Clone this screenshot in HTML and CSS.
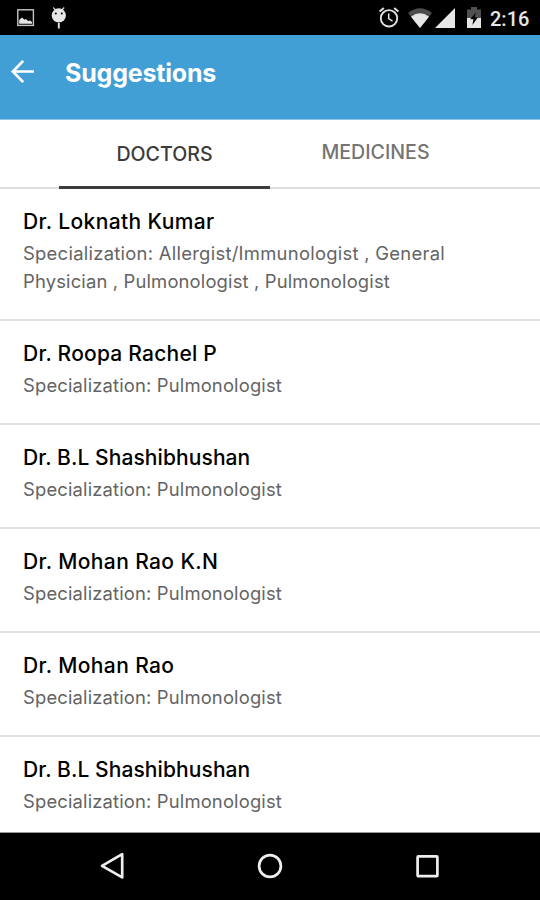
FILE: index.html
```html
<!DOCTYPE html>
<html lang="en">
<head>
  <meta charset="UTF-8">
  <title>Suggestions</title>
  <link rel="stylesheet" href="styles.css">
</head>
<body>
  <div class="status-bar">
    <div class="status-left">
      <svg class="icon-picture" width="18" height="18" viewBox="0 0 18 18">
        <rect x="0.8" y="0.8" width="15.6" height="15.6" fill="none" stroke="#c4c4c4" stroke-width="1.4"/>
        <path d="M2.2 14.8V11L5 8.5L7.5 10.8L9 10L11 12L13 11.4L15 13V14.8Z" fill="#e6e6e6"/>
      </svg>
      <svg class="icon-debug" width="16" height="22" viewBox="0 0 16 22">
        <path d="M2.3 0.5L4.5 3M13.2 0.5L11 3" stroke="#d8d8d8" stroke-width="1.2"/>
        <circle cx="7.8" cy="8.4" r="7.1" fill="#e6e6e6"/>
        <circle cx="4.8" cy="6.5" r="1" fill="#000"/>
        <circle cx="10.8" cy="6.5" r="1" fill="#000"/>
        <path d="M7.8 16V21.5" stroke="#d8d8d8" stroke-width="2"/>
      </svg>
    </div>
    <div class="status-right">
      <svg class="icon-alarm" width="20" height="21" viewBox="0 0 20 21">
        <circle cx="10" cy="11.3" r="8.2" fill="none" stroke="#e2e2e2" stroke-width="1.9"/>
        <path d="M0.6 4.6L4.8 1.1M19.4 4.6L15.2 1.1" stroke="#e2e2e2" stroke-width="2"/>
        <path d="M9.7 6.5V11.7L13.5 14.2" fill="none" stroke="#e2e2e2" stroke-width="1.5"/>
      </svg>
      <svg class="icon-wifi" width="24" height="20" viewBox="0 0 24 20">
        <path d="M0 5Q12 -4.3 24 5L12 20Z" fill="#4c4c4c"/>
        <path d="M3 8.8Q12 1.9 21 8.8L12 20Z" fill="#e6e6e6"/>
      </svg>
      <svg class="icon-signal" width="20" height="20" viewBox="0 0 20 20">
        <path d="M0 20L20 0V20Z" fill="#e6e6e6"/>
      </svg>
      <svg class="icon-battery" width="14" height="21" viewBox="0 0 14 21">
        <path d="M0 2.6H4V0H10V2.6H14V11H0Z" fill="#505050"/>
        <path d="M0 11H14V21H0Z" fill="#e6e6e6"/>
        <path d="M8.8 5.5L3.2 12.2H6.4L5.4 18L10.8 10.4H7.8Z" fill="#000"/>
      </svg>
      <span class="clock">2:16</span>
    </div>
  </div>

  <header class="app-bar">
    <svg class="back" width="23" height="23" viewBox="0 0 23 23">
      <path d="M12.2 0.9L1.8 11.5L12.2 22.1M1.8 11.5H23" fill="none" stroke="#fff" stroke-width="2.7"/>
    </svg>
    <h1>Suggestions</h1>
  </header>

  <nav class="tabs">
    <div class="tab active">DOCTORS</div>
    <div class="tab">MEDICINES</div>
  </nav>

  <main class="list">
    <section class="doctor">
      <h2>Dr. Loknath Kumar</h2>
      <p><span class="loose">Specialization: Allergist/Immunologist , General</span><br>Physician , Pulmonologist , Pulmonologist</p>
    </section>
    <section class="doctor">
      <h2 class="snug">Dr. Roopa Rachel P</h2>
      <p>Specialization: Pulmonologist</p>
    </section>
    <section class="doctor">
      <h2 class="tight">Dr. B.L Shashibhushan</h2>
      <p>Specialization: Pulmonologist</p>
    </section>
    <section class="doctor">
      <h2>Dr. Mohan Rao K.N</h2>
      <p>Specialization: Pulmonologist</p>
    </section>
    <section class="doctor">
      <h2>Dr. Mohan Rao</h2>
      <p>Specialization: Pulmonologist</p>
    </section>
    <section class="doctor">
      <h2 class="tight">Dr. B.L Shashibhushan</h2>
      <p>Specialization: Pulmonologist</p>
    </section>
  </main>

  <footer class="nav-bar">
    <svg width="26" height="28" viewBox="0 0 26 28">
      <path d="M23.2 2.2V25.4L3 13.8Z" fill="none" stroke="#eee" stroke-width="2.7" stroke-linejoin="round"/>
    </svg>
    <svg width="26" height="28" viewBox="0 0 26 28">
      <circle cx="13" cy="14" r="10.9" fill="none" stroke="#eee" stroke-width="2.7"/>
    </svg>
    <svg width="26" height="28" viewBox="0 0 26 28">
      <rect x="2.6" y="4.4" width="19.8" height="19.8" rx="0.8" fill="none" stroke="#eee" stroke-width="2.7"/>
    </svg>
  </footer>
</body>
</html>
```
FILE: styles.css
```css
* {
  box-sizing: border-box;
}

body {
  margin: 0;
  width: 540px;
  height: 900px;
  display: flex;
  flex-direction: column;
  overflow: hidden;
  background: #fff;
  font-family: Inter, "Liberation Sans", sans-serif;
}

svg {
  display: block;
  flex: none;
}

h1, h2, p {
  margin: 0;
}

/* status bar */
.status-bar {
  flex: none;
  height: 35px;
  display: flex;
  justify-content: space-between;
  background: #000;
}

.status-left,
.status-right {
  display: flex;
  align-items: flex-start;
}

.status-left {
  padding: 7px 0 0 17px;
  gap: 16px;
}

.icon-picture {
  margin-top: 2px;
}

.status-right {
  padding: 7px 11px 0 0;
}

.icon-alarm {
  margin-right: 9px;
}

.icon-wifi {
  margin-right: 3px;
}

.icon-wifi,
.icon-signal {
  margin-top: 1px;
}

.icon-battery {
  margin: 0 9px 0 12px;
}

.clock {
  width: 39px;
  font: 500 20px/24px Roboto, sans-serif;
  color: #e6e6e6;
  white-space: nowrap;
}

/* app bar */
.app-bar {
  flex: none;
  height: 85px;
  display: flex;
  align-items: flex-start;
  padding: 25px 11px 0;
  gap: 31px;
  background: #419fd6;
  border-bottom: 1px solid #8bc4e5;
}

h1 {
  font-size: 25px;
  line-height: 26px;
  font-weight: 700;
  letter-spacing: -0.2px;
  color: #fff;
}

/* tabs */
.tabs {
  flex: none;
  height: 69px;
  display: flex;
  padding: 0 59px;
  border-bottom: 2px solid #dedede;
}

.tab {
  width: 211px;
  height: 69px;
  padding-top: 18px;
  font-size: 19.6px;
  line-height: 28px;
  font-weight: 500;
  text-align: center;
  color: #757575;
}

.tab.active {
  padding-top: 20px;
  color: #3c3c3c;
  border-bottom: 3px solid #3c3c3c;
}

/* doctor list */
.list {
  flex: 1;
  overflow: hidden;
}

.doctor {
  padding: 15px 23px 24px;
  border-bottom: 2px solid #e2e2e2;
}

.doctor h2 {
  font-size: 21px;
  line-height: 35px;
  font-weight: 530;
  letter-spacing: 0.38px;
  color: #000;
}

.doctor h2.snug {
  letter-spacing: 0.22px;
}

.doctor h2.tight {
  letter-spacing: 0.09px;
}

.doctor p {
  font-size: 18.4px;
  line-height: 28px;
  letter-spacing: 0.16px;
  color: #646464;
  white-space: nowrap;
}

.doctor .loose {
  letter-spacing: 0.28px;
}

/* navigation bar */
.nav-bar {
  flex: none;
  height: 68px;
  display: flex;
  justify-content: center;
  align-items: flex-start;
  gap: 132px;
  padding-top: 19px;
  border-top: 1px solid #999;
  background: #000;
}
```
